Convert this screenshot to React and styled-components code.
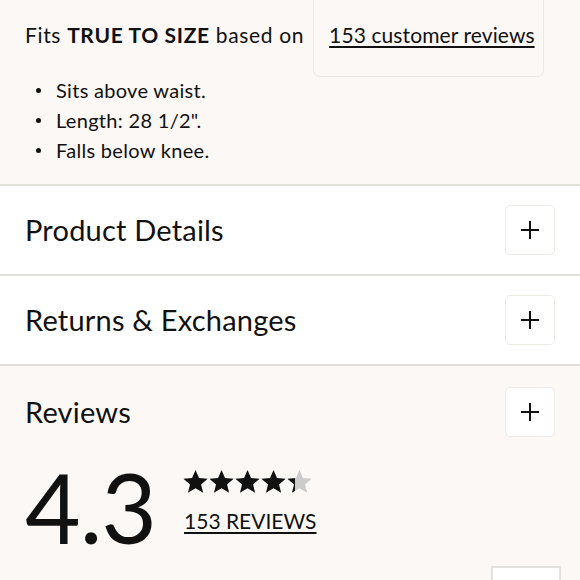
import React from "react";
import styled, { createGlobalStyle } from "styled-components";

const Global = createGlobalStyle`
  html, body { margin: 0; padding: 0; background: #fbf8f5; }
  body { font-family: Lato, "Open Sans", sans-serif; color: #111; overflow: hidden; }
  * { box-sizing: border-box; }
`;

const Page = styled.div`
  width: 580px;
  height: 580px;
  overflow: hidden;
  background: #fbf8f5;
`;

const FitSection = styled.section`
  padding: 0 25px 19px;
  border-bottom: 2px solid #e2e0dd;
`;

const FitRow = styled.div`
  display: flex;
  align-items: flex-start;
  gap: 9px;
`;

const FitText = styled.p`
  margin: 0;
  padding-top: 22px;
  font-size: 21px;
  line-height: 26px;
  letter-spacing: 0.65px;
  white-space: nowrap;
  b { font-weight: 700; }
`;

const ReviewsCard = styled.div`
  width: 231px;
  flex: none;
  padding: 22px 10px 28px 15px;
  border: 1px solid #ece8e4;
  border-top: none;
  border-radius: 0 0 7px 7px;
`;

const Link = styled.a`
  color: #111;
  font-size: 21px;
  line-height: 26px;
  letter-spacing: 0.1px;
  text-decoration: underline;
  text-underline-offset: 3px;
  text-decoration-thickness: 1.5px;
  cursor: pointer;
  white-space: nowrap;
`;

const Bullets = styled.ul`
  list-style: none;
  margin: -2px 0 0;
  padding: 0;
`;

const Bullet = styled.li`
  position: relative;
  padding-left: 31px;
  font-size: 20px;
  line-height: 30px;
  letter-spacing: 0.3px;
  &::before {
    content: "";
    position: absolute;
    left: 11px;
    top: 13px;
    width: 5px;
    height: 5px;
    border-radius: 50%;
    background: #111;
  }
`;

const AccordionRow = styled.div`
  display: flex;
  align-items: center;
  justify-content: space-between;
  height: ${(p) => p.$height || 90}px;
  padding: 0 25px;
  background: ${(p) => (p.$white ? "#fff" : "transparent")};
  border-bottom: ${(p) => (p.$divider ? "2px solid #e2e0dd" : "none")};
`;

const AccordionTitle = styled.h3`
  margin: 0 0 2px;
  font-size: 29px;
  font-weight: 400;
  letter-spacing: 0.2px;
`;

const PlusButton = styled.button`
  width: 50px;
  height: 50px;
  display: flex;
  align-items: center;
  justify-content: center;
  padding: 0;
  background: #fff;
  border: 1px solid #eeebe7;
  border-radius: 5px;
  cursor: pointer;
`;

const ReviewsBody = styled.div`
  display: flex;
  align-items: flex-start;
  gap: 28px;
  padding: 4px 25px 0;
`;

const BigScore = styled.div`
  font-size: 96px;
  line-height: 90px;
  font-weight: 400;
  letter-spacing: -1px;
`;

const ScoreMeta = styled.div`
  display: flex;
  flex-direction: column;
  gap: 14px;
  padding-top: 7px;
`;

const Stars = styled.div`
  display: flex;
  margin-left: -2px;
`;

const ReviewsLink = styled.a`
  color: #111;
  font-size: 21px;
  line-height: 24px;
  text-decoration: underline;
  text-underline-offset: 3px;
  text-decoration-thickness: 1.5px;
  cursor: pointer;
`;

const Footer = styled.div`
  display: flex;
  justify-content: flex-end;
  padding: 14px 19px 0 0;
`;

const SortBox = styled.div`
  width: 70px;
  height: 40px;
  background: #fff;
  border: 2px solid #e4e2df;
`;

const STAR = "M12 1l3.2 7.4 8 .6-6.1 5.2 1.9 7.8L12 17.8 5 22l1.9-7.8L.8 9l8-.6z";

function Star({ fill, id }) {
  return (
    <svg width="26" height="26" viewBox="-0.5 0 24 24">
      <defs>
        <linearGradient id={id} x1="0" x2="1" y1="0" y2="0">
          <stop offset={fill} stopColor="#111" />
          <stop offset={fill} stopColor="#cccccc" />
        </linearGradient>
      </defs>
      <path d={STAR} fill={`url(#${id})`} />
    </svg>
  );
}

function Plus() {
  return (
    <svg width="22" height="22" viewBox="0 0 22 22">
      <path d="M11 2v18M2 11h18" stroke="#111" strokeWidth="2" />
    </svg>
  );
}

const rows = [
  { title: "Product Details" },
  { title: "Returns & Exchanges" },
];

export default function App() {
  const rating = 4.3;
  return (
    <Page>
      <Global />
      <FitSection>
        <FitRow>
          <FitText>
            Fits <b>TRUE TO SIZE</b> based on
          </FitText>
          <ReviewsCard>
            <Link>153 customer reviews</Link>
          </ReviewsCard>
        </FitRow>
        <Bullets>
          <Bullet>Sits above waist.</Bullet>
          <Bullet>Length: 28 1/2".</Bullet>
          <Bullet>Falls below knee.</Bullet>
        </Bullets>
      </FitSection>
      {rows.map((r) => (
        <AccordionRow key={r.title} $white $divider>
          <AccordionTitle>{r.title}</AccordionTitle>
          <PlusButton aria-label="Expand">
            <Plus />
          </PlusButton>
        </AccordionRow>
      ))}
      <AccordionRow $height={92}>
        <AccordionTitle>Reviews</AccordionTitle>
        <PlusButton aria-label="Expand">
          <Plus />
        </PlusButton>
      </AccordionRow>
      <ReviewsBody>
        <BigScore>4.3</BigScore>
        <ScoreMeta>
          <Stars>
            {[0, 1, 2, 3, 4].map((i) => (
              <Star key={i} id={`s${i}`} fill={Math.max(0, Math.min(1, rating - i))} />
            ))}
          </Stars>
          <ReviewsLink>153 REVIEWS</ReviewsLink>
        </ScoreMeta>
      </ReviewsBody>
      <Footer>
        <SortBox />
      </Footer>
    </Page>
  );
}
